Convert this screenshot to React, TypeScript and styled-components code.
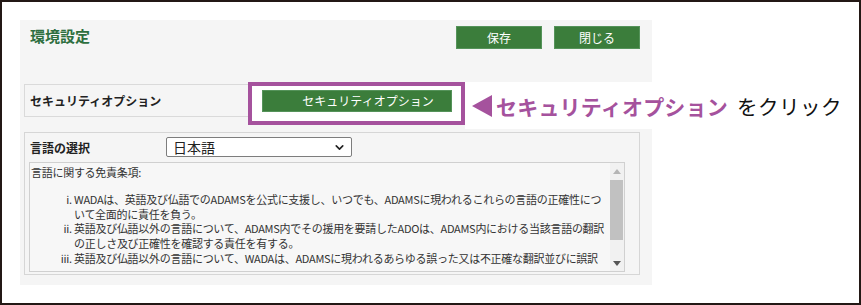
import React from 'react';
import styled, { createGlobalStyle } from 'styled-components';
import { ChevronDown } from 'lucide-react';

const GlobalStyle = createGlobalStyle`
  html, body {
    margin: 0;
    padding: 0;
    background: #ffffff;
  }
  body {
    font-family: "Noto Sans CJK JP", "Noto Sans", sans-serif;
    color: #222;
  }
`;

const GREEN = '#3b7d3b';
const PURPLE = '#a5529d';

const Frame = styled.div`
  position: relative;
  width: 861px;
  height: 305px;
  box-sizing: border-box;
  border: 2px solid #231815;
  background: #fff;
  overflow: hidden;
`;

const Panel = styled.div`
  margin: 18px 0 0 18px;
  width: 632px;
  height: 265px;
  box-sizing: border-box;
  padding: 6px 12px 10px 4px;
  background: #f5f5f5;
`;

const Header = styled.div`
  display: flex;
  justify-content: space-between;
  align-items: flex-start;
  height: 23px;
  padding-left: 6px;
`;

const Title = styled.h1`
  margin: 0;
  font-size: 15px;
  line-height: 20px;
  font-weight: 700;
  color: #2e6f40;
`;

const ButtonGroup = styled.div`
  display: flex;
  gap: 12px;
`;

const Button = styled.button<{ $width?: number; $height?: number; $indent?: number }>`
  position: relative;
  z-index: 2;
  width: ${(p) => p.$width ?? 86}px;
  height: ${(p) => p.$height ?? 23}px;
  box-sizing: border-box;
  padding: 0 0 0 ${(p) => p.$indent ?? 0}px;
  border: 1px solid #55935a;
  background: ${GREEN};
  color: #fff;
  font-family: inherit;
  font-size: 12px;
  line-height: 1;
`;

const SecurityRow = styled.div`
  margin-top: 35px;
  display: flex;
  align-items: center;
  height: 33px;
  box-sizing: border-box;
  padding-left: 5px;
  border: 1px solid #dadada;
`;

const RowLabel = styled.div<{ $width: number }>`
  width: ${(p) => p.$width}px;
  flex-shrink: 0;
  font-size: 12px;
  font-weight: 700;
  color: #222;
`;

const LangBox = styled.div`
  margin-top: 15px;
  height: 143px;
  box-sizing: border-box;
  padding: 4px 14px 2px 4px;
  border: 1px solid #d6d6d6;
`;

const LangHeader = styled.div`
  display: flex;
  align-items: center;
  height: 20px;
  padding-left: 1px;
`;

const SelectBox = styled.div`
  width: 186px;
  height: 20px;
  box-sizing: border-box;
  display: flex;
  align-items: center;
  justify-content: space-between;
  padding: 0 5px 0 6px;
  border: 1px solid #7d7d7d;
  border-radius: 2px;
  background: #fff;
  font-size: 14px;
  color: #222;
`;

const Disclaimer = styled.div`
  margin-top: 5px;
  height: 110px;
  box-sizing: border-box;
  display: flex;
  border: 1px solid #d0d0d0;
  background: #f7f7f7;
`;

const DisclaimerText = styled.div`
  flex: 1;
  overflow: hidden;
  padding: 2px 0 0 1px;
  font-size: 11px;
  line-height: 14.8px;
  letter-spacing: -0.28px;
  color: #333;
`;

const Intro = styled.p`
  margin: 0;
`;

const List = styled.ol`
  margin: 12px 0 0;
  padding-left: 43px;
  list-style: lower-roman;
`;

const Line = styled.span`
  display: block;
  white-space: nowrap;
`;

const Scrollbar = styled.div`
  width: 14px;
  display: flex;
  flex-direction: column;
  align-items: center;
  background: #f1f1f1;
`;

const ScrollArrow = styled.div<{ $dark?: boolean }>`
  height: 16px;
  display: flex;
  align-items: center;
  justify-content: center;
  color: ${(p) => (p.$dark ? '#555' : '#b5b5b5')};
`;

const ScrollTrack = styled.div`
  flex: 1;
  width: 100%;
`;

const ScrollThumb = styled.div`
  margin-top: 1px;
  height: 60px;
  width: 13px;
  background: #c1c1c1;
`;

const Highlight = styled.div`
  position: absolute;
  left: 246px;
  top: 80px;
  width: 217px;
  height: 43px;
  box-sizing: border-box;
  border: 4px solid ${PURPLE};
  background: #fff;
  z-index: 1;
`;

const Callout = styled.div`
  position: absolute;
  left: 463px;
  top: 80px;
  width: 394px;
  height: 47px;
  display: flex;
  align-items: center;
  padding-left: 7px;
  box-sizing: border-box;
  background: #fff;
  z-index: 1;
`;

const CalloutStrong = styled.span`
  margin-left: 4px;
  font-size: 21px;
  font-weight: 700;
  color: ${PURPLE};
  letter-spacing: 0.2px;
`;

const CalloutPlain = styled.span`
  margin-left: 9px;
  font-size: 20.5px;
  font-weight: 400;
  letter-spacing: 0.5px;
  color: #111;
`;

const disclaimer = [
  [
    'WADAは、英語及び仏語でのADAMSを公式に支援し、いつでも、ADAMSに現われるこれらの言語の正確性につ',
    'いて全面的に責任を負う。',
  ],
  [
    '英語及び仏語以外の言語について、ADAMS内でその援用を要請したADOは、ADAMS内における当該言語の翻訳',
    'の正しさ及び正確性を確認する責任を有する。',
  ],
  ['英語及び仏語以外の言語について、WADAは、ADAMSに現われるあらゆる誤った又は不正確な翻訳並びに誤訳'],
];

function Arrow({ down }: { down?: boolean }) {
  return (
    <svg width="8" height="5" viewBox="0 0 8 5">
      <polygon points={down ? '0,0 8,0 4,5' : '0,5 8,5 4,0'} fill="currentColor" />
    </svg>
  );
}

export default function App() {
  return (
    <>
      <GlobalStyle />
      <Frame>
        <Panel>
          <Header>
            <Title>環境設定</Title>
            <ButtonGroup>
              <Button>保存</Button>
              <Button>閉じる</Button>
            </ButtonGroup>
          </Header>

          <SecurityRow>
            <RowLabel $width={232}>セキュリティオプション</RowLabel>
            <Button $width={190} $height={22} $indent={22}>
              セキュリティオプション
            </Button>
          </SecurityRow>

          <LangBox>
            <LangHeader>
              <RowLabel $width={136}>言語の選択</RowLabel>
              <SelectBox>
                <span>日本語</span>
                <ChevronDown size={13} strokeWidth={3} color="#222" />
              </SelectBox>
            </LangHeader>
            <Disclaimer>
              <DisclaimerText>
                <Intro>言語に関する免責条項:</Intro>
                <List>
                  {disclaimer.map((item, index) => (
                    <li key={index}>
                      {item.map((line, i) => (
                        <Line key={i}>{line}</Line>
                      ))}
                    </li>
                  ))}
                </List>
              </DisclaimerText>
              <Scrollbar>
                <ScrollArrow>
                  <Arrow />
                </ScrollArrow>
                <ScrollTrack>
                  <ScrollThumb />
                </ScrollTrack>
                <ScrollArrow $dark>
                  <Arrow down />
                </ScrollArrow>
              </Scrollbar>
            </Disclaimer>
          </LangBox>
        </Panel>

        <Highlight />
        <Callout>
          <svg width="20" height="22" viewBox="0 0 20 22">
            <polygon points="20,0 20,22 0,11" fill={PURPLE} />
          </svg>
          <CalloutStrong>セキュリティオプション</CalloutStrong>
          <CalloutPlain>をクリック</CalloutPlain>
        </Callout>
      </Frame>
    </>
  );
}
